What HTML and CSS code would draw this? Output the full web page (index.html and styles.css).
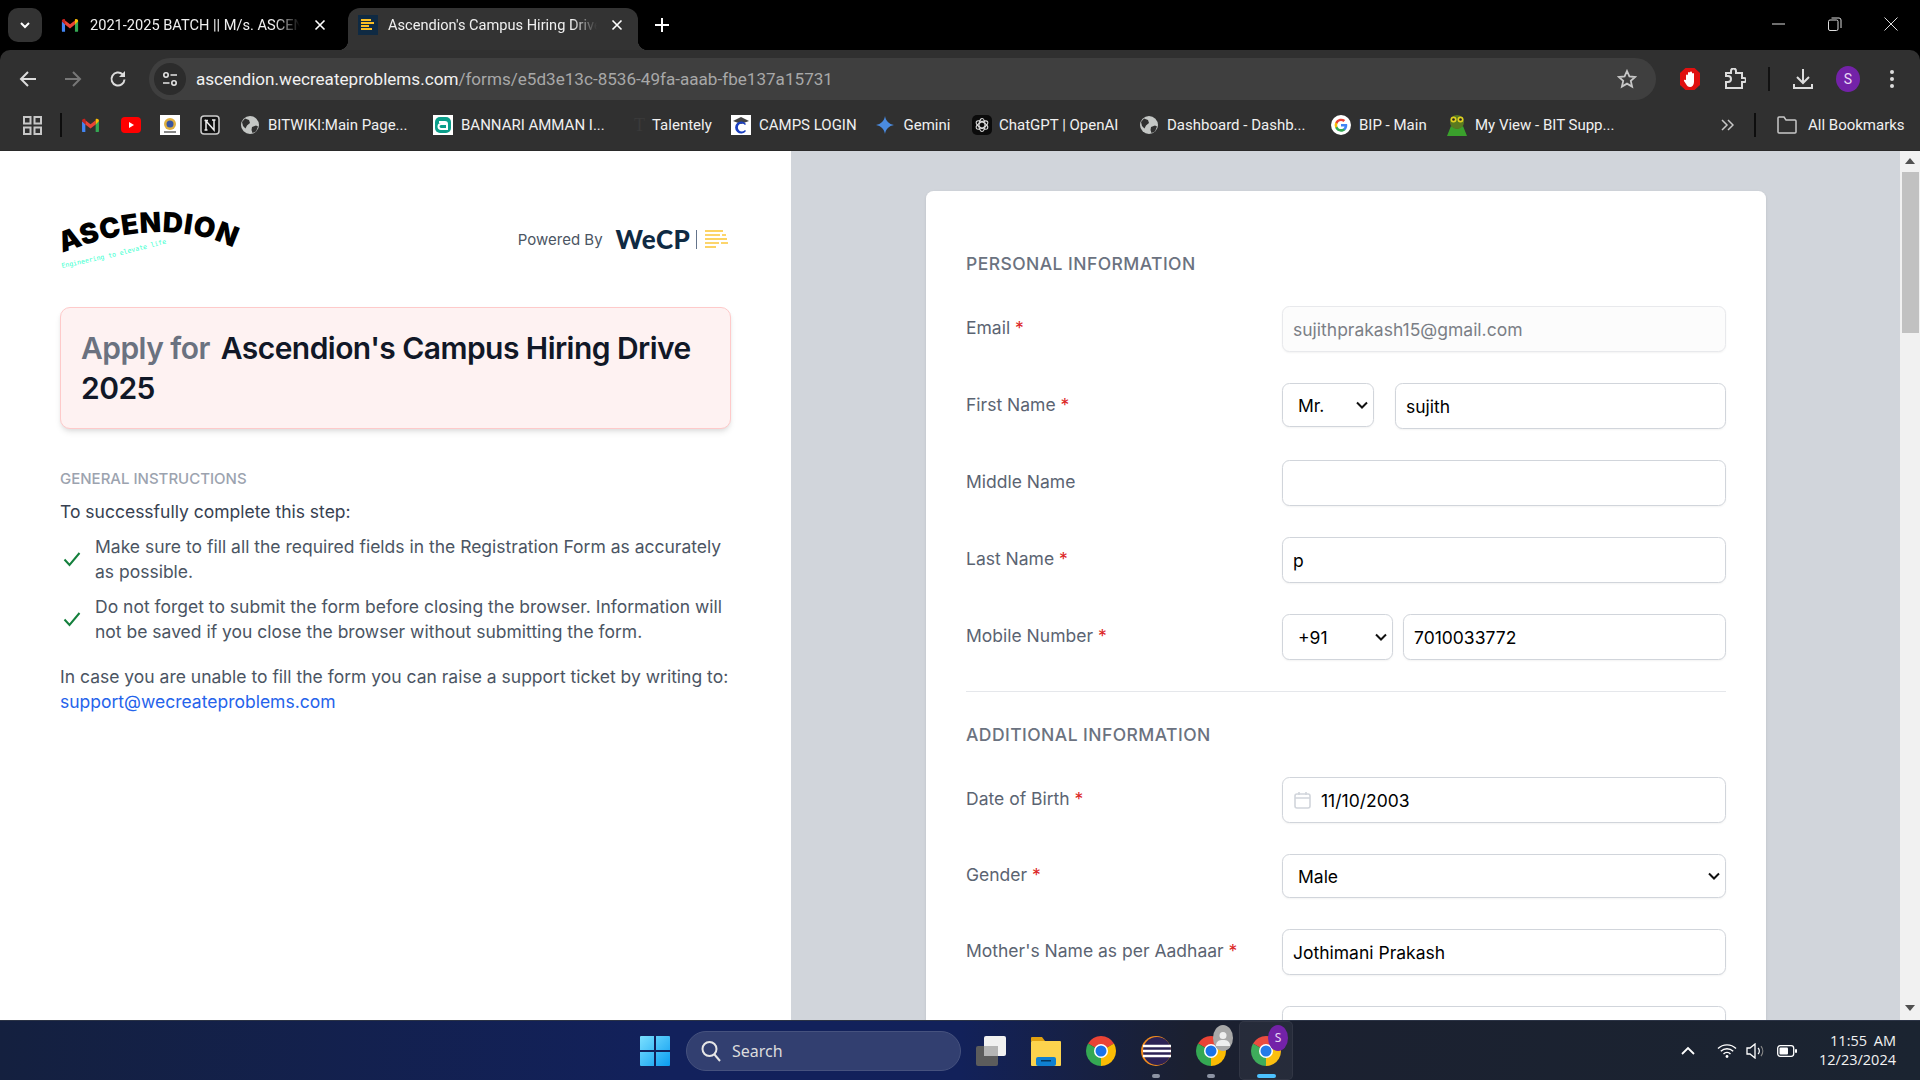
FILE: index.html
```html
<!DOCTYPE html>
<html lang="en">
<head>
<meta charset="utf-8">
<title>Ascendion's Campus Hiring Drive 2025</title>
<link rel="stylesheet" href="styles.css">
</head>
<body>
<svg class="defs" width="0" height="0" aria-hidden="true">
  <symbol id="chrome" viewBox="0 0 24 24">
    <path d="M12 12L1.61 6A12 12 0 0 1 22.39 6Z" fill="#ea4335"/>
    <path d="M12 12L22.39 6A12 12 0 0 1 12 24Z" fill="#fbbc04"/>
    <path d="M12 12L12 24A12 12 0 0 1 1.61 6Z" fill="#34a853"/>
    <circle cx="12" cy="12" r="5.6" fill="#fff"/>
    <circle cx="12" cy="12" r="4.4" fill="#1a73e8"/>
  </symbol>
  <symbol id="gmail" viewBox="0 0 20 16">
    <path d="M1 15V3.5L4.5 6v9H2a1 1 0 0 1-1-1z" fill="#4285f4"/>
    <path d="M15.5 15V6L19 3.5V14a1 1 0 0 1-1 1z" fill="#34a853"/>
    <path d="M4.5 7V2.5L10 6.6l5.5-4.1V7L10 11.2z" fill="#ea4335"/>
    <path d="M1 3.5V3C1 1 3.2.3 4.5 1.3V7z" fill="#c5221f"/>
    <path d="M15.5 7V1.3C16.800.3 19 1 19 3v.5z" fill="#fbbc04"/>
  </symbol>
  <symbol id="globe" viewBox="0 0 20 20">
    <circle cx="10" cy="10" r="9" fill="#c4c7c5"/>
    <path d="M5 3.500l4 1.500 1 3-3 2.500-1.500 3L3 11 2 7zM12 12l4-1.500 2 1-2 5-3.500 1.500-1-3z" fill="#303030"/>
  </symbol>
</svg>

<header class="tabstrip">
  <button class="tab-search"><svg width="14" height="14" viewBox="0 0 14 14"><path d="M3 5l4 4 4-4" fill="none" stroke="#fff" stroke-width="2"/></svg></button>
  <div class="tab tab-idle">
    <svg class="tab-icon" width="18" height="15"><use href="#gmail"/></svg>
    <span class="tab-title">2021-2025 BATCH || M/s. ASCENDION</span>
    <svg class="tab-x" width="12" height="12" viewBox="0 0 12 12"><path d="M1.500 1.500l9 9m0-9l-9 9" stroke="#fff" stroke-width="1.600"/></svg>
  </div>
  <div class="tab tab-active">
    <svg class="tab-icon" width="20" height="20" viewBox="0 0 20 20"><rect width="20" height="20" fill="#0f2a43"/><path d="M3 5h10M3 8h13M3 11h8M3 14h11" stroke="#fbbf24" stroke-width="1.800"/></svg>
    <span class="tab-title">Ascendion's Campus Hiring Drive 2025</span>
    <svg class="tab-x" width="12" height="12" viewBox="0 0 12 12"><path d="M1.500 1.500l9 9m0-9l-9 9" stroke="#fff" stroke-width="1.600"/></svg>
  </div>
  <svg class="tab-new" width="14" height="14" viewBox="0 0 14 14"><path d="M7 0v14M0 7h14" stroke="#fff" stroke-width="2"/></svg>
  <div class="win-controls">
    <svg width="14" height="14" viewBox="0 0 14 14"><path d="M0 7h13" stroke="#ddd" stroke-width="1"/></svg>
    <svg width="14" height="14" viewBox="0 0 14 14"><rect x=".5" y="3" width="9.500" height="10.500" rx="1.500" fill="none" stroke="#ddd"/><path d="M3.500 1h7.500a2 2 0 0 1 2 2v8" fill="none" stroke="#ddd"/></svg>
    <svg width="14" height="14" viewBox="0 0 14 14"><path d="M.5.500l13 13m0-13l-13 13" stroke="#ddd" stroke-width="1"/></svg>
  </div>
</header>

<nav class="toolbar">
  <svg class="nav-icon" width="18" height="18" viewBox="0 0 18 18"><path d="M17 9H2.500M9 2L2 9l7 7" fill="none" stroke="#dcdcdc" stroke-width="2"/></svg>
  <svg class="nav-icon" width="18" height="18" viewBox="0 0 18 18"><path d="M1 9h14.500M9 2l7 7-7 7" fill="none" stroke="#777" stroke-width="2"/></svg>
  <svg class="nav-icon" width="18" height="18" viewBox="0 0 18 18"><path d="M15.500 9.500A6.500 6.500 0 1 1 13.500 4.300" fill="none" stroke="#dcdcdc" stroke-width="2"/><path d="M16 1v6h-6z" fill="#dcdcdc"/></svg>
  <div class="omnibox">
    <span class="site-chip"><svg width="18" height="18" viewBox="0 0 18 18"><circle cx="5" cy="5" r="2.200" fill="none" stroke="#e3e3e3" stroke-width="1.600"/><path d="M9.500 5H16M2 13h6.500" stroke="#e3e3e3" stroke-width="1.600"/><circle cx="13" cy="13" r="2.200" fill="none" stroke="#e3e3e3" stroke-width="1.600"/></svg></span>
    <span class="url"><span class="url-host">ascendion.wecreateproblems.com</span>/forms/e5d3e13c-8536-49fa-aaab-fbe137a15731</span>
    <svg class="star" width="20" height="20" viewBox="0 0 20 20"><path d="M10 2l2.400 5.400 5.800.6-4.400 3.900 1.300 5.700L10 14.600l-5.100 3 1.300-5.700L1.800 8l5.800-.6z" fill="none" stroke="#c7c7c7" stroke-width="1.800"/></svg>
  </div>
  <div class="tb-actions">
    <svg class="adblock" width="22" height="24" viewBox="0 0 22 24"><path d="M6.500 1h9L21 6v12l-5.500 5h-9L1 18V6z" fill="#e0100f"/><path d="M7 13V8.500a1 1 0 0 1 2 0V6a1 1 0 0 1 2 0v-.5a1 1 0 0 1 2 0V7a1 1 0 0 1 2 0v8c0 3-2 5-4 5s-3-1-4-3l-2-3c-.5-1 .8-1.800 1.500-1z" fill="#fff"/></svg>
    <svg class="puzzle" width="22" height="22" viewBox="0 0 22 22"><path d="M2 8V5h5V3a2.500 2.500 0 0 1 5 0v2h6v5h2a2 2 0 0 1 0 4h-2v6H2v-6h2a3 3 0 0 0 0-6z" fill="none" stroke="#dcdcdc" stroke-width="2"/></svg>
    <span class="tb-sep"></span>
    <svg class="download" width="22" height="22" viewBox="0 0 22 22"><path d="M11 1v13M5 9l6 6 6-6M2 16v4h18v-4" fill="none" stroke="#dcdcdc" stroke-width="2"/></svg>
    <span class="avatar">S</span>
    <svg class="kebab" width="6" height="20" viewBox="0 0 6 20"><circle cx="3" cy="3" r="2" fill="#dcdcdc"/><circle cx="3" cy="10" r="2" fill="#dcdcdc"/><circle cx="3" cy="17" r="2" fill="#dcdcdc"/></svg>
  </div>
</nav>

<nav class="bookmarks">
  <svg class="bm-apps" width="19" height="19" viewBox="0 0 19 19"><path d="M1 1h6.500v6.500H1zM11.500 1H18v6.500h-6.500zM1 11.500h6.500V18H1zM11.500 11.500H18V18h-6.500z" fill="none" stroke="#c7c7c7" stroke-width="2"/></svg>
  <span class="bm-sep"></span>
  <a class="bm w-gmail"><svg width="19" height="15"><use href="#gmail"/></svg></a>
  <a class="bm w-yt"><svg width="20" height="16" viewBox="0 0 20 16"><rect width="20" height="16" rx="4" fill="#f00"/><path d="M8 5l5 3-5 3z" fill="#fff"/></svg></a>
  <a class="bm w-seal"><svg width="20" height="20" viewBox="0 0 20 20"><rect width="20" height="20" fill="#fff"/><circle cx="10" cy="9" r="6" fill="#e0b040"/><circle cx="10" cy="9" r="3.500" fill="#3a55a0"/><rect x="4" y="16" width="12" height="2" fill="#888"/></svg></a>
  <a class="bm w-notion"><svg width="20" height="20" viewBox="0 0 20 20"><rect x="1" y="1" width="18" height="18" rx="3" fill="#111" stroke="#ccc" stroke-width="1.500"/><path d="M6 15V6l8 9V5M4.500 5.500H8M12 5h3.500M4.500 15h3" fill="none" stroke="#eee" stroke-width="1.500"/></svg></a>
  <a class="bm w-wiki"><svg width="20" height="20"><use href="#globe"/></svg><span>BITWIKI:Main Page...</span></a>
  <a class="bm w-bannari"><svg width="20" height="20" viewBox="0 0 20 20"><rect width="20" height="20" fill="#fff"/><rect x="2" y="2" width="16" height="16" rx="5" fill="#0b9e8a"/><path d="M6 7h6a2 2 0 0 1 2 2v5H8a2.500 2.500 0 0 1 0-5h6" fill="none" stroke="#fff" stroke-width="2"/></svg><span>BANNARI AMMAN I...</span></a>
  <a class="bm w-talent"><span class="t-mark">T</span><span>Talentely</span></a>
  <a class="bm w-camps"><svg width="20" height="20" viewBox="0 0 20 20"><rect width="20" height="20" fill="#fff"/><path d="M2 6l8-4 8 4-8 3z" fill="#444"/><path d="M15 9a6 6 0 1 0 0 7l-1-1a4 4 0 1 1 0-5z" fill="#1a3fc0"/></svg><span>CAMPS LOGIN</span></a>
  <a class="bm w-gemini"><svg width="20" height="20" viewBox="0 0 20 20"><path d="M10 1c.8 5 4 8.200 9 9-5 .8-8.200 4-9 9-.8-5-4-8.200-9-9 5-.8 8.200-4 9-9z" fill="#4a8be0"/></svg><span>Gemini</span></a>
  <a class="bm w-gpt"><svg width="20" height="20" viewBox="0 0 20 20"><rect width="20" height="20" rx="5" fill="#0b0b0b"/><g fill="none" stroke="#ddd" stroke-width="1.200"><ellipse cx="10" cy="10" rx="3" ry="6.500"/><ellipse cx="10" cy="10" rx="3" ry="6.500" transform="rotate(60 10 10)"/><ellipse cx="10" cy="10" rx="3" ry="6.500" transform="rotate(120 10 10)"/></g></svg><span>ChatGPT | OpenAI</span></a>
  <a class="bm w-dash"><svg width="20" height="20"><use href="#globe"/></svg><span>Dashboard - Dashb...</span></a>
  <a class="bm w-bip"><svg width="20" height="20" viewBox="0 0 24 24"><circle cx="12" cy="12" r="12" fill="#fff"/><path d="M19.500 12.300c0-.6-.1-1.100-.2-1.600H12v3.100h4.200a3.600 3.600 0 0 1-1.600 2.400v2h2.500c1.500-1.300 2.400-3.400 2.400-5.900z" fill="#4285f4"/><path d="M12 20c2.100 0 3.900-.7 5.100-1.800l-2.500-2c-.7.500-1.500.7-2.600.7-2 0-3.700-1.300-4.300-3.200H5.100v2A8 8 0 0 0 12 20z" fill="#34a853"/><path d="M7.700 13.700a4.800 4.800 0 0 1 0-3.100v-2H5.100a8 8 0 0 0 0 7.100z" fill="#fbbc04"/><path d="M12 7.200c1.100 0 2.100.4 2.900 1.100l2.200-2.200A8 8 0 0 0 5.100 8.600l2.600 2c.6-2 2.300-3.400 4.300-3.400z" fill="#ea4335"/></svg><span>BIP - Main</span></a>
  <a class="bm w-view"><svg width="20" height="22" viewBox="0 0 20 22"><path d="M0 22l4-10 6 3 6-3 4 10z" fill="#3aa02c"/><circle cx="10" cy="8" r="7" fill="#5a7a20"/><circle cx="6.500" cy="5.500" r="3" fill="#e0d020"/><circle cx="13.500" cy="5.500" r="3" fill="#e0d020"/><circle cx="6.500" cy="5.500" r="1.300" fill="#222"/><circle cx="13.500" cy="5.500" r="1.300" fill="#222"/></svg><span>My View - BIT Supp...</span></a>
  <svg class="bm-more" width="13" height="12" viewBox="0 0 13 12"><path d="M1 1l5 5-5 5M7 1l5 5-5 5" fill="none" stroke="#c7c7c7" stroke-width="1.500"/></svg>
  <span class="bm-sep bm-sep2"></span>
  <a class="bm bm-all"><svg width="20" height="18" viewBox="0 0 20 18"><path d="M1 15V2a1 1 0 0 1 1-1h5l2 3h9a1 1 0 0 1 1 1v11a1 1 0 0 1-1 1H2a1 1 0 0 1-1-1z" fill="none" stroke="#c7c7c7" stroke-width="1.500"/></svg><span>All Bookmarks</span></a>
</nav>

<main class="page">
  <section class="intro">
    <div class="brand-row">
      <svg class="logo" width="190" height="64" viewBox="0 0 190 64" role="img" aria-label="Ascendion">
        <defs>
          <path id="logo-arc" d="M0 47 Q112 4 186 50"/>
          <path id="logo-tag" d="M0 62 Q50 52 110 36"/>
        </defs>
        <text class="logo-word"><textPath href="#logo-arc">ASCENDION</textPath></text>
        <text class="logo-tag"><textPath href="#logo-tag">Engineering to elevate life</textPath></text>
      </svg>
      <div class="powered">
        <span class="powered-label">Powered By</span>
        <span class="wecp">WeCP</span>
        <span class="wecp-bar"></span>
        <svg width="25" height="19" viewBox="0 0 25 19"><g stroke="#fcc83c" stroke-width="1.600"><path d="M1 1h18"/><path d="M1 5h15M18 5h4"/><path d="M1 9h22"/><path d="M1 13h14M17 13h7"/><path d="M1 17h11"/></g></svg>
      </div>
    </div>
    <div class="apply-card">
      <h1 class="apply-title"><span class="apply-for">Apply for</span> Ascendion's Campus Hiring Drive 2025</h1>
    </div>
    <h2 class="gi-title">GENERAL INSTRUCTIONS</h2>
    <p class="gi-lead">To successfully complete this step:</p>
    <ul class="gi-list">
      <li class="gi-item"><svg width="18" height="16" viewBox="0 0 18 16"><path d="M1.500 8.500l5 5.500L16.500 2" fill="none" stroke="#15803d" stroke-width="2"/></svg><span>Make sure to fill all the required fields in the Registration Form as accurately as possible.</span></li>
      <li class="gi-item"><svg width="18" height="16" viewBox="0 0 18 16"><path d="M1.500 8.500l5 5.500L16.500 2" fill="none" stroke="#15803d" stroke-width="2"/></svg><span>Do not forget to submit the form before closing the browser. Information will not be saved if you close the browser without submitting the form.</span></li>
    </ul>
    <p class="gi-help">In case you are unable to fill the form you can raise a support ticket by writing to: <a class="gi-link">support@wecreateproblems.com</a></p>
  </section>

  <section class="form-pane">
    <form class="form-card">
      <h3 class="form-head">PERSONAL INFORMATION</h3>
      <div class="row">
        <label class="lbl">Email <b>*</b></label>
        <input class="field field-off" value="sujithprakash15@gmail.com" disabled>
      </div>
      <div class="row">
        <label class="lbl">First Name <b>*</b></label>
        <div class="combo combo-title">
          <select class="sel sel-short"><option>Mr.</option></select>
          <input class="field" value="sujith">
        </div>
      </div>
      <div class="row">
        <label class="lbl">Middle Name</label>
        <input class="field" value="">
      </div>
      <div class="row">
        <label class="lbl">Last Name <b>*</b></label>
        <input class="field" value="p">
      </div>
      <div class="row">
        <label class="lbl">Mobile Number <b>*</b></label>
        <div class="combo combo-phone">
          <select class="sel"><option>+91</option></select>
          <input class="field" value="7010033772">
        </div>
      </div>
      <hr class="rule">
      <h3 class="form-head form-head2">ADDITIONAL INFORMATION</h3>
      <div class="row">
        <label class="lbl">Date of Birth <b>*</b></label>
        <div class="date-box">
          <svg width="17" height="18" viewBox="0 0 17 18"><rect x="1" y="3" width="15" height="14" rx="2" fill="none" stroke="#d1d5db" stroke-width="1.600"/><path d="M1 7h15M5 1v3M12 1v3" stroke="#d1d5db" stroke-width="1.600"/></svg>
          <input class="date-input" value="11/10/2003">
        </div>
      </div>
      <div class="row row-short">
        <label class="lbl">Gender <b>*</b></label>
        <select class="sel sel-full"><option>Male</option></select>
      </div>
      <div class="row">
        <label class="lbl">Mother's Name as per Aadhaar <b>*</b></label>
        <input class="field" value="Jothimani Prakash">
      </div>
      <div class="row">
        <label class="lbl"></label>
        <input class="field" value="">
      </div>
    </form>
  </section>

  <aside class="scrollbar">
    <svg width="10" height="6" viewBox="0 0 10 6"><path d="M5 0l5 6H0z" fill="#505050"/></svg>
    <div class="scroll-thumb"></div>
    <svg class="scroll-down" width="10" height="6" viewBox="0 0 10 6"><path d="M5 6L0 0h10z" fill="#505050"/></svg>
  </aside>
</main>

<footer class="taskbar">
  <div class="task-center">
    <svg class="win-logo" width="30" height="30" viewBox="0 0 30 30"><defs><linearGradient id="wl" x1="0" y1="0" x2="1" y2="1"><stop offset="0" stop-color="#7be0ff"/><stop offset="1" stop-color="#0a9cf0"/></linearGradient></defs><path d="M0 1a1 1 0 0 1 1-1h13v14H0zM16 0h13a1 1 0 0 1 1 1v13H16zM0 16h14v14H1a1 1 0 0 1-1-1zM16 16h14v13a1 1 0 0 1-1 1H16z" fill="url(#wl)"/></svg>
    <div class="search-pill">
      <svg width="22" height="24" viewBox="0 0 22 24"><circle cx="9.500" cy="10" r="7" fill="none" stroke="#e6e6e6" stroke-width="2"/><path d="M14.500 15.500L20 22" stroke="#e6e6e6" stroke-width="2"/></svg>
      <span>Search</span>
    </div>
    <div class="task-icons">
      <span class="task-app"><svg width="30" height="30" viewBox="0 0 30 30"><rect x="0" y="10" width="22" height="20" rx="2" fill="#5c5c5c"/><rect x="8" y="0" width="22" height="20" rx="2" fill="#f1f1f1"/><rect x="8" y="10" width="14" height="10" fill="#b5b5b5"/></svg></span>
      <span class="task-app"><svg width="30" height="30" viewBox="0 0 30 30"><path d="M0 2a1 1 0 0 1 1-1h10l3 4H0z" fill="#e0a010"/><rect y="5" width="30" height="25" rx="1" fill="#fcd34d"/><rect x="5" y="21" width="20" height="9" rx="2" fill="#0f80d0"/><rect x="10" y="24" width="10" height="1.500" fill="#04385f"/></svg></span>
      <span class="task-app"><svg width="30" height="30"><use href="#chrome"/></svg></span>
      <span class="task-app task-run"><svg width="30" height="30" viewBox="0 0 30 30"><circle cx="15" cy="15" r="15" fill="#f28c1e"/><circle cx="16" cy="15" r="14" fill="#2c2255"/><path d="M2 10h28M2 15h28M2 20h28" stroke="#fff" stroke-width="2.500"/></svg></span>
      <span class="task-app task-run task-badged"><svg width="30" height="30"><use href="#chrome"/></svg><span class="badge badge-grey"><svg width="20" height="20" viewBox="0 0 20 20"><circle cx="10" cy="7.500" r="3.500" fill="#eee"/><path d="M3 18c0-5 3-6 7-6s7 1 7 6z" fill="#eee"/></svg></span></span>
      <span class="task-app task-active"><svg width="30" height="30"><use href="#chrome"/></svg><span class="badge badge-s">S</span></span>
    </div>
  </div>
  <div class="tray">
    <svg width="14" height="9" viewBox="0 0 14 9"><path d="M1 8l6-6 6 6" fill="none" stroke="#fff" stroke-width="1.800"/></svg>
    <svg class="tray-wifi" width="20" height="15" viewBox="0 0 20 15"><g fill="none" stroke="#fff" stroke-width="1.400"><path d="M1 5.500a13 13 0 0 1 18 0"/><path d="M3.800 8.300a9 9 0 0 1 12.400 0"/><path d="M6.500 11a5 5 0 0 1 7 0"/></g><circle cx="10" cy="13.500" r="1.400" fill="#fff"/></svg>
    <svg width="21" height="16" viewBox="0 0 21 16"><path d="M1 5h3l5-4v14l-5-4H1z" fill="none" stroke="#fff" stroke-width="1.300"/><path d="M12 5a4 4 0 0 1 0 6" fill="none" stroke="#fff" stroke-width="1.200"/><path d="M15 3a8 8 0 0 1 0 10" fill="none" stroke="#888" stroke-width="1.200"/></svg>
    <svg width="20" height="12" viewBox="0 0 20 12"><rect x=".7" y=".7" width="16" height="10.600" rx="2.500" fill="none" stroke="#fff" stroke-width="1.300"/><rect x="2.500" y="2.500" width="8.500" height="7" rx="1" fill="#fff"/><rect x="18" y="4" width="2" height="4" rx="1" fill="#fff"/></svg>
    <div class="clock"><span>11:55 AM</span><span>12/23/2024</span></div>
  </div>
</footer>
</body>
</html>
```

FILE: styles.css
```css
* { box-sizing: border-box; }
html, body { margin: 0; padding: 0; }
body {
  width: 1920px;
  height: 1080px;
  overflow: hidden;
  display: flex;
  flex-direction: column;
  background: #000;
  font-family: Inter, "Liberation Sans", sans-serif;
}
.defs { position: absolute; }

/* tab strip */
.tabstrip {
  height: 50px;
  flex: none;
  display: flex;
  align-items: flex-end;
  background: #000;
  padding-left: 8px;
  font-family: Roboto, sans-serif;
  font-size: 14.6px;
  color: #f0f0f0;
}
.tab-search {
  width: 34px;
  height: 34px;
  margin-bottom: 8px;
  padding: 0;
  border: 0;
  border-radius: 10px;
  background: #333;
  display: flex;
  align-items: center;
  justify-content: center;
}
.tab {
  height: 42px;
  display: flex;
  align-items: center;
  padding-bottom: 8px;
  position: relative;
}
.tab-idle {
  width: 300px;
  margin-left: 6px;
  padding-left: 13px;
  padding-right: 22px;
}
.tab-idle .tab-icon { margin-right: 11px; }
.tab-active {
  width: 290px;
  padding-left: 10px;
  padding-right: 15px;
  background: #333;
  border-radius: 12px 12px 0 0;
}
.tab-active::before,
.tab-active::after {
  content: "";
  position: absolute;
  bottom: 0;
  width: 10px;
  height: 10px;
}
.tab-active::before { left: -10px; background: radial-gradient(circle at 0 0, #000 10px, #333 10.5px); }
.tab-active::after { right: -10px; background: radial-gradient(circle at 100% 0, #000 10px, #333 10.5px); }
.tab-icon { flex: none; margin-right: 10px; }
.tab-title {
  flex: 1;
  min-width: 0;
  white-space: nowrap;
  overflow: hidden;
  -webkit-mask-image: linear-gradient(to right, #000 88%, transparent 100%);
  mask-image: linear-gradient(to right, #000 88%, transparent 100%);
}
.tab-x { flex: none; margin-left: 14px; }
.tab-new { margin: 0 0 18px 17px; }
.win-controls {
  margin-left: auto;
  align-self: flex-start;
  display: flex;
  gap: 42px;
  padding: 17px 22px 0 0;
}

/* toolbar */
.toolbar {
  height: 50px;
  flex: none;
  display: flex;
  align-items: center;
  background: #303030;
  border-radius: 10px 10px 0 0;
  padding: 8px 0 0 19px;
}
.nav-icon { flex: none; margin-right: 27px; }
.nav-icon:nth-of-type(3) { margin-right: 22px; }
.omnibox {
  width: 1507px;
  height: 42px;
  flex: none;
  display: flex;
  align-items: center;
  background: #3f3f3f;
  border-radius: 21px;
  padding: 0 19px 0 5px;
}
.site-chip {
  width: 32px;
  height: 32px;
  border-radius: 50%;
  background: #2c2c2c;
  display: flex;
  align-items: center;
  justify-content: center;
}
.url {
  flex: 1;
  margin-left: 10px;
  font-family: Roboto, sans-serif;
  font-size: 17.1px;
  color: #a8a8a8;
  white-space: nowrap;
}
.url-host { color: #f1f1f1; }
.tb-actions {
  flex: 1;
  display: flex;
  align-items: center;
  padding-left: 23px;
}
.adblock { margin-right: 23px; }
.puzzle { margin-right: 22px; }
.tb-sep { width: 2px; height: 24px; background: #111; margin-right: 22px; }
.download { margin-right: 22px; }
.avatar {
  width: 24px;
  height: 26px;
  border-radius: 50%;
  background: #7322a8;
  color: #e8d8f4;
  font-family: Roboto, sans-serif;
  font-size: 14px;
  display: flex;
  align-items: center;
  justify-content: center;
  margin-right: 29px;
}

/* bookmarks */
.bookmarks {
  height: 51px;
  flex: none;
  display: flex;
  align-items: center;
  background: #303030;
  padding-left: 23px;
  font-family: Roboto, sans-serif;
  font-size: 15px;
  color: #f0f0f0;
  border-bottom: 1px solid #2a2a2a;
}
.bm-apps { flex: none; margin-right: 18px; }
.bm-sep { width: 2px; height: 24px; background: #0d0d0d; margin-right: 19px; flex: none; }
.bm {
  flex: none;
  display: flex;
  align-items: center;
  gap: 7px;
  white-space: nowrap;
}
.w-gmail { width: 40px; }
.w-yt { width: 39px; }
.w-seal { width: 40px; }
.w-notion { width: 40px; }
.w-wiki { width: 193px; gap: 8px; }
.w-bannari { width: 201px; gap: 8px; }
.w-talent { width: 97px; gap: 4px; }
.w-camps { width: 144px; gap: 8px; }
.w-gemini { width: 97px; gap: 8.5px; }
.w-gpt { width: 167px; gap: 7px; }
.w-dash { width: 192px; gap: 8px; }
.w-bip { width: 116px; gap: 8px; }
.w-view { width: 274px; gap: 8px; }
.t-mark {
  width: 14px;
  color: #3a3a3a;
  font-family: "Liberation Serif", serif;
  font-size: 18px;
}
.bm-more { flex: none; margin-right: 20px; }
.bm-sep2 { margin-right: 21px; }
.bm-all { gap: 11px; }

/* page */
.page {
  flex: 1;
  min-height: 0;
  display: flex;
  overflow: hidden;
  background: #d1d5db;
}
.intro {
  width: 791px;
  flex: none;
  background: #fff;
  padding: 0 60px;
}
.brand-row {
  height: 156px;
  display: flex;
  justify-content: space-between;
  align-items: flex-start;
  margin-right: 2px;
}
.logo { margin: 55px 0 0 2px; overflow: visible; }
.logo-word {
  font-family: Inter, sans-serif;
  font-weight: 900;
  font-size: 28px;
  letter-spacing: .6px;
  fill: #000;
}
.logo-tag {
  font-family: "DejaVu Sans Mono", monospace;
  font-size: 6.6px;
  fill: #3affd0;
}
.powered {
  margin-top: 74px;
  height: 28px;
  display: flex;
  align-items: center;
}
.powered-label { font-size: 15px; color: #4b5563; margin-right: 13px; }
.wecp {
  font-family: Lato, sans-serif;
  font-weight: 900;
  font-size: 26px;
  letter-spacing: .3px;
  color: #0f2a43;
}
.wecp-bar { width: 1px; height: 19px; background: #64748b; margin: 0 7px 0 6px; }
.apply-card {
  height: 122px;
  padding: 20px 20px 0;
  background: #fef2f2;
  border: 1px solid #fecaca;
  border-radius: 10px;
  box-shadow: 0 4px 6px -1px rgba(0,0,0,.1), 0 2px 4px -1px rgba(0,0,0,.06);
}
.apply-title {
  margin: 0;
  font-size: 30px;
  line-height: 40px;
  font-weight: 600;
  color: #111827;
  letter-spacing: -.55px;
}
.apply-for { color: #6b7280; margin-right: 4px; }
.gi-title {
  margin: 40px 0 0;
  font-size: 15px;
  line-height: 20px;
  font-weight: 500;
  color: #9ca3af;
}
.gi-lead {
  margin: 9.5px 0 0;
  font-size: 17.5px;
  line-height: 25px;
  color: #374151;
}
.gi-list { list-style: none; margin: 10px 0 0; padding: 0; }
.gi-item {
  display: flex;
  align-items: center;
  gap: 14px;
  margin-bottom: 10px;
  padding-left: 3px;
  font-size: 17.5px;
  line-height: 25px;
  color: #4b5563;
}
.gi-item svg { flex: none; }
.gi-help {
  margin: 20px 0 0;
  font-size: 17.5px;
  line-height: 25px;
  color: #4b5563;
}
.gi-link { color: #2563eb; display: block; }

.form-pane {
  flex: 1;
  min-width: 0;
  padding: 40px 0 0 135px;
}
.form-card {
  width: 840px;
  height: 1100px;
  background: #fff;
  border-radius: 7.5px;
  padding: 60px 40px 0;
  box-shadow: 0 1px 3px rgba(0,0,0,.1);
}
.form-head {
  margin: 0 0 30px;
  font-size: 17.5px;
  line-height: 25px;
  font-weight: 500;
  letter-spacing: .44px;
  color: #6b7280;
}
.form-head2 { margin-top: 30px; margin-bottom: 30px; }
.row {
  display: grid;
  grid-template-columns: 316px 444px;
  height: 46px;
  margin-bottom: 31px;
}
.row-short { height: 44px; }
.row-short .lbl { padding-top: 8px; }
.lbl {
  font-size: 17.5px;
  line-height: 25px;
  color: #5b6472;
  padding-top: 9px;
}
.lbl b { font-weight: 400; color: #dc2626; }
.field {
  width: 100%;
  height: 46px;
  min-width: 0;
  padding: 0 10px;
  font: 17.5px Inter, sans-serif;
  color: #000;
  background: #fff;
  border: 1px solid #d1d5db;
  border-radius: 7.5px;
  box-shadow: 0 1px 2px rgba(0,0,0,.05);
}
.field-off { background: #fcfcfc; color: #7b7f86; border-color: #e8e9ec; opacity: 1; }
.sel {
  appearance: none;
  -webkit-appearance: none;
  width: 100%;
  height: 46px;
  padding: 0 0 0 15px;
  font: 17.5px Inter, sans-serif;
  color: #000;
  background: #fff url("data:image/svg+xml,%3Csvg xmlns='http://www.w3.org/2000/svg' width='12' height='8' viewBox='0 0 12 8'%3E%3Cpath d='M1 1.500l5 5 5-5' fill='none' stroke='%23111' stroke-width='2'/%3E%3C/svg%3E") no-repeat right 5px center;
  border: 1px solid #d1d5db;
  border-radius: 7.5px;
  box-shadow: 0 1px 2px rgba(0,0,0,.05);
}
.sel-short, .sel-full { height: 44px; }
.combo { display: grid; align-items: start; }
.combo-title { grid-template-columns: 92px 331px; column-gap: 21px; }
.combo-phone { grid-template-columns: 111px 323px; column-gap: 10px; }
.date-box {
  height: 46px;
  display: flex;
  align-items: center;
  gap: 10px;
  padding-left: 11px;
  background: #fff;
  border: 1px solid #d1d5db;
  border-radius: 7.5px;
  box-shadow: 0 1px 2px rgba(0,0,0,.05);
}
.date-box svg { flex: none; }
.date-input {
  flex: 1;
  min-width: 0;
  border: 0;
  padding: 0;
  outline: 0;
  font: 17.5px Inter, sans-serif;
  color: #000;
  background: transparent;
}
.rule {
  margin: 0;
  border: 0;
  border-top: 1px solid #e5e7eb;
  width: 760px;
}

.scrollbar {
  width: 20px;
  flex: none;
  background: #f1f1f1;
  display: flex;
  flex-direction: column;
  align-items: center;
  padding-top: 7px;
}
.scroll-thumb { width: 17px; height: 161px; background: #c1c1c1; margin-top: 8px; }
.scroll-down { margin-top: auto; margin-bottom: 9px; }

/* taskbar */
.taskbar {
  height: 60px;
  flex: none;
  display: flex;
  align-items: center;
  position: relative;
  border-top: 1px solid #2b3345;
  background: linear-gradient(to right, #14203f 0%, #12215c 35%, #12215a 50%, #1b2030 62%, #1b2431 100%);
  color: #f2f2f2;
  font-family: "Noto Sans", sans-serif;
}
.task-center {
  margin-left: 640px;
  display: flex;
  align-items: center;
}
.win-logo { flex: none; margin-right: 16px; }
.search-pill {
  width: 275px;
  height: 40px;
  border-radius: 20px;
  background: #323f70;
  border: 1px solid #46527e;
  display: flex;
  align-items: center;
  gap: 10px;
  padding-left: 13px;
  font-size: 16px;
  color: #dcdcdc;
}
.task-icons { display: flex; margin-left: 15px; gap: 25px; }
.task-app { position: relative; width: 30px; height: 30px; display: block; }
.task-app > svg { display: block; }
.task-run::after {
  content: "";
  position: absolute;
  left: 11px;
  bottom: -12px;
  width: 8px;
  height: 4px;
  border-radius: 2px;
  background: #8c93a3;
}
.task-active::before {
  content: "";
  position: absolute;
  inset: -15px -12px -14px;
  border-radius: 5px;
  background: rgba(255,255,255,.05);
  border: 1px solid rgba(255,255,255,.05);
}
.task-active::after {
  content: "";
  position: absolute;
  left: 6px;
  bottom: -12px;
  width: 19px;
  height: 4px;
  border-radius: 2px;
  background: #4cc2ff;
}
.badge {
  position: absolute;
  top: -11px;
  right: -7px;
  width: 20px;
  height: 26px;
  border-radius: 50%;
  display: flex;
  align-items: center;
  justify-content: center;
  font-size: 12px;
}
.badge-grey { background: #a8a8a8; }
.badge-s { background: #7322a8; color: #e8d8f4; }
.tray {
  margin-left: auto;
  display: flex;
  align-items: center;
  padding-right: 24px;
}
.tray > svg { flex: none; }
.tray-wifi { margin: 0 9.5px 0 22px; }
.tray > svg:nth-of-type(3) { margin-right: 10px; }
.clock {
  width: 99px;
  margin-top: -2px;
  display: flex;
  flex-direction: column;
  align-items: flex-end;
  font-family: "Open Sans", sans-serif;
  font-size: 14.5px;
  line-height: 19px;
  word-spacing: 3px;
}
```
